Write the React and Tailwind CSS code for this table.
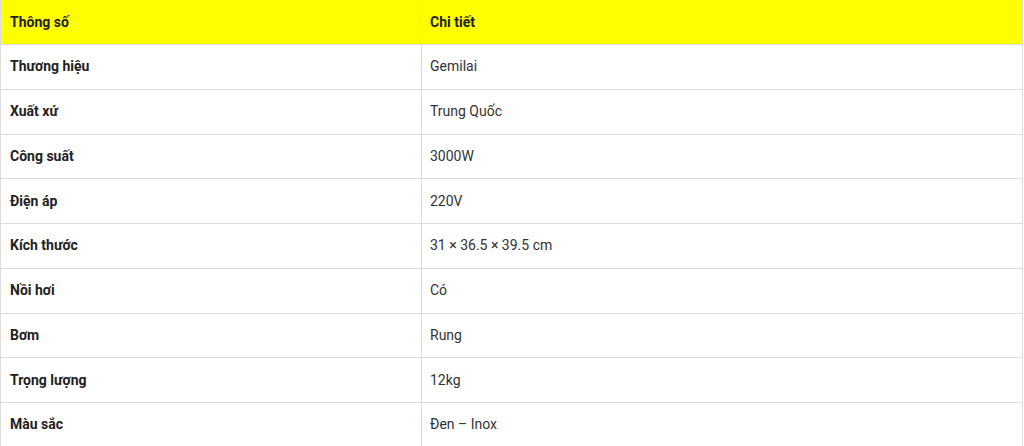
import React from "react";

const rows = [
  ["Thương hiệu", "Gemilai"],
  ["Xuất xứ", "Trung Quốc"],
  ["Công suất", "3000W"],
  ["Điện áp", "220V"],
  ["Kích thước", "31 × 36.5 × 39.5 cm"],
  ["Nồi hơi", "Có"],
  ["Bơm", "Rung"],
  ["Trọng lượng", "12kg"],
  ["Màu sắc", "Đen – Inox"],
];

const App = () => {
  return (
    <div className="w-[1024px] h-[446px] overflow-hidden bg-white font-['Roboto',sans-serif] text-[14px]">
      <table className="w-[1023px] border-collapse table-fixed">
        <thead>
          <tr className="h-[44.5px] bg-[#ffff00]">
            <th className="w-[421px] border border-t-0 border-[#dcdcdc] px-[9px] text-left font-bold text-[#222]">
              Thông số
            </th>
            <th className="border border-t-0 border-[#dcdcdc] px-[8px] text-left font-bold text-[#222]">
              Chi tiết
            </th>
          </tr>
        </thead>
        <tbody>
          {rows.map(([label, value]) => (
            <tr key={label} className="h-[44.75px]">
              <td className="border border-[#dcdcdc] px-[9px] font-bold text-[#222]">
                {label}
              </td>
              <td className="border border-[#dcdcdc] px-[8px] text-[#333]">
                {value}
              </td>
            </tr>
          ))}
        </tbody>
      </table>
    </div>
  );
};

export default App;
